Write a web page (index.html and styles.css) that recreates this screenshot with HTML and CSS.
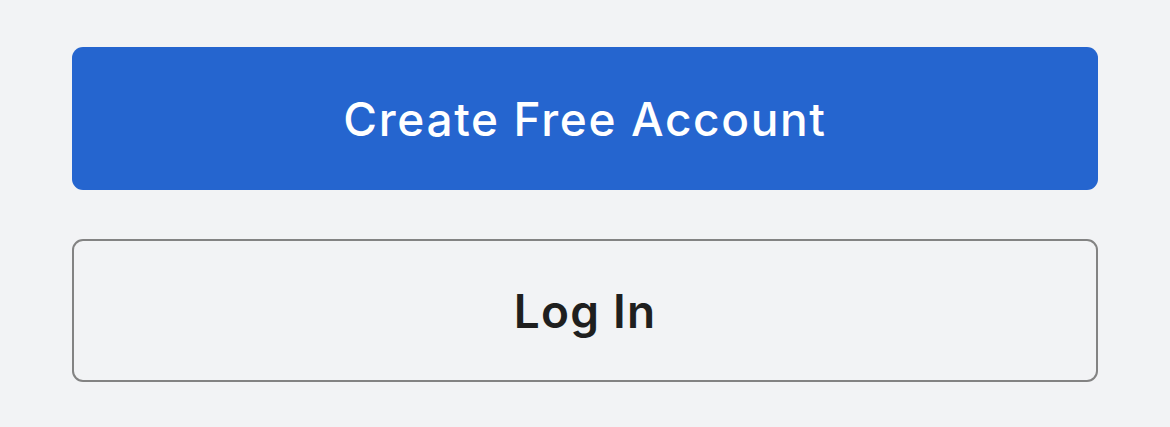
FILE: index.html
```html
<!DOCTYPE html>
<html lang="en">
<head>
    <meta charset="UTF-8">
    <meta name="viewport" content="width=device-width, initial-scale=1.0">
    <title>Sign up</title>
    <link rel="stylesheet" href="styles.css">
</head>
<body>
    <div class="actions">
        <button class="btn btn-primary" type="button">Create Free Account</button>
        <button class="btn btn-outline" type="button">Log In</button>
    </div>
</body>
</html>
```

FILE: styles.css
```css
body {
    font-family: Inter, "Noto Sans", Arial, sans-serif;
    background-color: #f2f3f5;
    margin: 0;
}
.actions {
    display: flex;
    flex-direction: column;
    gap: 49px;
    padding: 47px 72px;
}
.btn {
    height: 143px;
    width: 100%;
    border-radius: 11px;
    font-family: inherit;
    font-size: 46px;
    letter-spacing: 1.2px;
    cursor: pointer;
}
.btn-primary {
    background-color: #2565cf;
    color: #fff;
    border: none;
    font-weight: 500;
    letter-spacing: 1.65px;
}
.btn-outline {
    background-color: transparent;
    color: #1f1f1f;
    border: 2px solid #838383;
    font-weight: 600;
}
```
